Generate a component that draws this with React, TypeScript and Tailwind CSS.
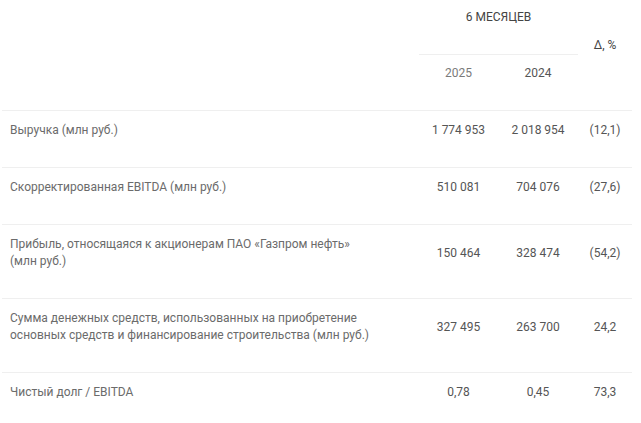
const rows = [
  {
    label: "Выручка (млн руб.)",
    y2025: "1 774 953",
    y2024: "2 018 954",
    delta: "(12,1)",
  },
  {
    label: "Скорректированная EBITDA (млн руб.)",
    y2025: "510 081",
    y2024: "704 076",
    delta: "(27,6)",
  },
  {
    label: "Прибыль, относящаяся к акционерам ПАО «Газпром нефть» (млн руб.)",
    y2025: "150 464",
    y2024: "328 474",
    delta: "(54,2)",
  },
  {
    label:
      "Сумма денежных средств, использованных на приобретение основных средств и финансирование строительства (млн руб.)",
    y2025: "327 495",
    y2024: "263 700",
    delta: "24,2",
  },
  {
    label: "Чистый долг / EBITDA",
    y2025: "0,78",
    y2024: "0,45",
    delta: "73,3",
  },
];

export default function App() {
  return (
    <div className="min-h-[423px] bg-white font-['Roboto',sans-serif] text-[12px] leading-[17px] text-[#6b6b6b]">
      <table className="ml-[2px] w-[630px] table-fixed border-collapse">
        <colgroup>
          <col className="w-[417px]" />
          <col className="w-[79px]" />
          <col className="w-[80px]" />
          <col className="w-[54px]" />
        </colgroup>
        <thead>
          <tr>
            <th rowSpan={2} className="border-b border-[#efefef] pt-[9px] pb-[28px]" />
            <th
              colSpan={2}
              className="border-b border-[#efefef] pt-[9px] pb-[28px] text-center font-normal uppercase text-[#444]"
            >
              6 месяцев
            </th>
            <th
              rowSpan={2}
              className="border-b border-[#efefef] pt-[9px] pb-[28px] text-center align-middle font-normal text-[#444]"
            >
              Δ, %
            </th>
          </tr>
          <tr>
            <th className="border-b border-[#efefef] pt-[10px] pb-[28px] text-center font-normal text-[#7a7a7a]">
              2025
            </th>
            <th className="border-b border-[#efefef] pt-[10px] pb-[28px] text-center font-normal text-[#555]">
              2024
            </th>
          </tr>
        </thead>
        <tbody>
          {rows.map((row) => (
            <tr key={row.label} className="border-t border-[#efefef]">
              <td className="pt-[11px] pb-[28px] pl-[8px] pr-[47px] align-middle">
                {row.label}
              </td>
              <td className="pt-[11px] pb-[28px] text-center align-middle text-[#555]">
                {row.y2025}
              </td>
              <td className="pt-[11px] pb-[28px] text-center align-middle text-[#555]">
                {row.y2024}
              </td>
              <td className="pt-[11px] pb-[28px] text-center align-middle text-[#555]">
                {row.delta}
              </td>
            </tr>
          ))}
        </tbody>
      </table>
    </div>
  );
}
